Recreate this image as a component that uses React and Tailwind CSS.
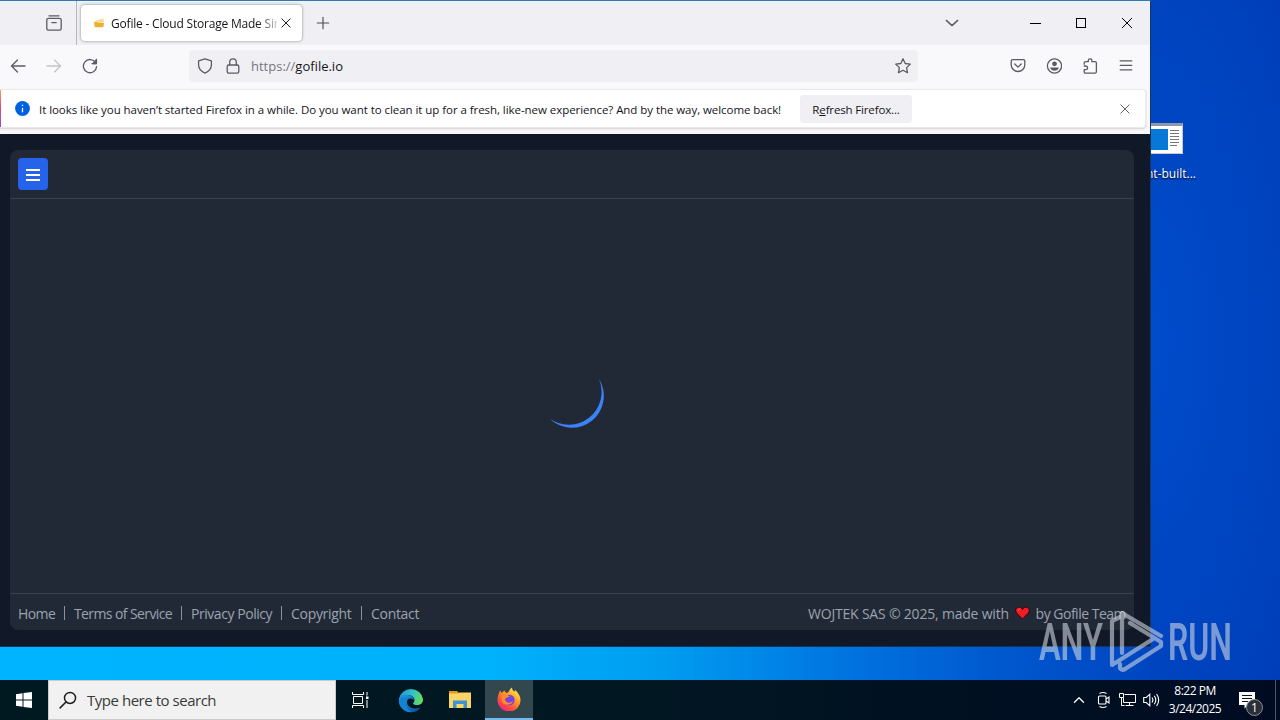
import React from "react";
import { ChevronUp } from "lucide-react";

const footerLinks = [
  { label: "Home", className: "w-[37px] tracking-[-0.6px]" },
  { label: "Terms of Service", className: "w-[98px] tracking-[-0.6px]" },
  { label: "Privacy Policy", className: "w-[81px] tracking-[-0.45px]" },
  { label: "Copyright", className: "w-[61px] tracking-[-0.3px]" },
  { label: "Contact", className: "w-[50px] tracking-[-0.3px]" },
];

const Icon = ({ size = 16, className = "", children }) => (
  <svg
    width={size}
    height={size}
    viewBox="0 0 16 16"
    fill="none"
    stroke="currentColor"
    strokeWidth="1.3"
    strokeLinecap="round"
    strokeLinejoin="round"
    className={`shrink-0 ${className}`}
  >
    {children}
  </svg>
);

const TabStrip = () => (
  <div className="flex h-[44px] items-center bg-[#efeff4]">
    <div className="flex h-full w-[77px] items-center justify-end border-r border-[#b5b5bd] pr-[14px] text-[#5b5b66]">
      <Icon>
        <path d="M3 .8h10" />
        <rect x="0.8" y="3.3" width="14.4" height="11.9" rx="1.8" />
        <path d="M5.8 7.6h4.4" />
      </Icon>
    </div>
    <div className="ml-[4px] flex h-[36px] w-[221px] items-center rounded-[4px] bg-white pl-[12px] shadow-[0_0_3px_rgba(0,0,0,0.45)]">
      <svg width="12" height="12" viewBox="0 0 12 12" className="shrink-0">
        <path d="M2 4.5 L4.5 3 L10.5 1.5 L11 5 L2 7z" fill="#f7dc93" />
        <path d="M1 5h3l1 1h6l-.5 3.5q-.2.8-1 .8H2.6q-.8 0-1-.8z" fill="#eeb02e" />
      </svg>
      <div className="ml-[6px] mt-px w-[166px] overflow-hidden whitespace-nowrap text-[12px] tracking-[-0.2px] text-[#15141a] [mask-image:linear-gradient(to_right,#000_146px,transparent_172px)]">
        Gofile - Cloud Storage Made Simple
      </div>
      <Icon size={12} className="ml-[3px] text-[#15141a]">
        <path d="M2.5 2.5l11 11M13.5 2.5l-11 11" />
      </Icon>
    </div>
    <Icon size={14} className="ml-[14px] text-[#4a4a55]">
      <path d="M8 1.5v13M1.5 8h13" />
    </Icon>
    <div className="ml-auto flex items-center">
      <Icon size={14} className="mr-[71px] text-[#5b5b66]">
        <path d="M1.5 5l6.5 6 6.5-6" strokeWidth="1.6" />
      </Icon>
      <div className="mr-[35px] h-px w-[11px] bg-black" />
      <div className="mr-[35px] h-[10px] w-[10px] border border-black" />
      <svg width="12" height="12" viewBox="0 0 12 12" className="mr-[17px]" stroke="#000" strokeWidth="1">
        <path d="M1 1l10 10M11 1L1 11" />
      </svg>
    </div>
  </div>
);

const NavBar = () => (
  <div className="flex h-[44px] items-center bg-[#f9f9fb] pb-[3px] text-[#5b5b66]">
    <Icon className="ml-[10px]">
      <path d="M15 8H1.5M7.5 2L1.5 8l6 6" />
    </Icon>
    <Icon className="ml-[20px] text-[#c3c3ca]">
      <path d="M1 8h13.5M8.5 2l6 6-6 6" />
    </Icon>
    <Icon className="ml-[20px]">
      <path d="M13.6 4.6A6.6 6.6 0 1 0 14.6 8.6M14.4 1.4v4.2h-4.4" />
      <path d="M14.4 2v3.6h-3.6z" fill="currentColor" />
    </Icon>
    <div className="ml-[91px] flex h-[32px] w-[729px] items-center rounded-[4px] bg-[#f0f0f4] pl-[8px]">
      <Icon>
        <path d="M8 .9l6.4 2v4.2c0 3.8-2.8 6.4-6.4 8-3.6-1.6-6.4-4.2-6.4-8V2.9z" />
      </Icon>
      <Icon className="ml-[12px]">
        <rect x="2.2" y="7" width="11.6" height="8.2" rx="1.6" />
        <path d="M4.7 7V4.2a3.3 3.3 0 0 1 6.6 0V7" />
      </Icon>
      <div className="ml-[10px] mt-[3px] text-[13px] text-[#777780]">
        https://<span className="text-[#15141a]">gofile.io</span>
      </div>
      <Icon className="ml-auto mr-[7px]">
        <path d="M8 .8l2.2 4.7 5.1.6-3.7 3.5.9 5.1L8 12.2l-4.5 2.5.9-5.1L.7 6.1l5.1-.6z" />
      </Icon>
    </div>
    <Icon className="ml-[92px]">
      <path d="M2.6 1.7h10.8q1.4 0 1.4 1.4v3.6a6.8 6.8 0 0 1-13.6 0V3.1q0-1.4 1.4-1.4zM4.8 6L8 9.1l3.2-3.1" />
    </Icon>
    <Icon className="ml-[20px]">
      <circle cx="8.5" cy="8" r="7.1" />
      <circle cx="8.5" cy="5.8" r="2.4" fill="currentColor" stroke="none" />
      <path d="M4.2 9.6h8.6c0 1.9-2 3.1-4.3 3.1S4.2 11.5 4.2 9.6z" fill="currentColor" stroke="none" />
    </Icon>
    <Icon className="ml-[20px]">
      <path d="M2.2 6.2V4.9q0-1.2 1.3-1.2h2.8V2.6a1.8 1.8 0 0 1 3.6 0v1.1h3.2q1.3 0 1.3 1.2v8.9q0 1.3-1.3 1.3H3.5q-1.3 0-1.3-1.3V11.7h1.5a1.8 1.8 0 0 0 0-3.7H2.2" />
    </Icon>
    <Icon className="ml-[20px]">
      <path d="M2.2 2.8h11.6M2.2 7.3h11.6M2.2 11.8h11.6" />
    </Icon>
  </div>
);

const Notification = () => (
  <div className="h-[45px] bg-[#f8f8fa] pr-[4px]">
    <div className="flex h-[39px] items-center rounded-r-[4px] border border-l-0 border-[#e9e9ed] bg-white shadow-[0_1px_2px_rgba(58,57,68,0.2)]">
      <div className="h-full w-px shrink-0 bg-gradient-to-b from-[#ff9a50] via-[#e0457b] to-[#8a45d8]" />
      <svg width="15" height="15" viewBox="0 0 15 15" className="ml-[14px] shrink-0">
        <circle cx="7.5" cy="7.5" r="7.4" fill="#0060df" />
        <path d="M7.5 6.8v4.4M7.5 3.8v1.2" stroke="#fff" strokeWidth="1.3" />
      </svg>
      <div className="ml-[9px] mt-[2px] w-[761px] whitespace-nowrap text-[11.5px] tracking-[-0.055px] text-[#15141a]">
        It looks like you haven’t started Firefox in a while. Do you want to clean it up for a fresh, like-new
        experience? And by the way, welcome back!
      </div>
      <button className="h-[28px] w-[112px] whitespace-nowrap rounded-[4px] bg-[#f0f0f4] pt-[2px] text-[11.5px] tracking-[-0.15px] text-[#15141a]">
        R<span className="underline">e</span>fresh Firefox...
      </button>
      <Icon size={12} className="ml-auto mr-[14px] text-[#5b5b66]">
        <path d="M2.5 2.5l11 11M13.5 2.5l-11 11" />
      </Icon>
    </div>
  </div>
);

const Page = () => (
  <div className="flex flex-1 flex-col bg-[#111827] pb-[16px] pl-[10px] pr-[16px] pt-[16px]">
    <div className="flex flex-1 flex-col rounded-[8px] bg-[#212936] text-[#9ca3af]">
      <div className="flex h-[49px] items-center border-b border-[#374151] px-[8px]">
        <button className="flex h-[32px] w-[30px] items-center justify-center rounded-[4px] bg-[#2563eb] pt-px">
          <span className="flex w-[14px] flex-col gap-[3px]">
            <span className="h-[2px] bg-white" />
            <span className="h-[2px] bg-white" />
            <span className="h-[2px] bg-white" />
          </span>
        </button>
      </div>
      <div className="flex flex-1 items-center justify-center">
        <svg width="66" height="66" viewBox="0 0 66 66">
          <path d="M59.9 15.7A32 32 0 0 1 10.4 55.6A33 33 0 0 0 59.9 15.7z" fill="#3b82f6" />
        </svg>
      </div>
      <div className="flex h-[37px] items-center justify-between border-t border-[#374151] px-[8px] pt-[2px] text-[14px]">
        <div className="flex items-center whitespace-nowrap">
          {footerLinks.map((link, i) => (
            <React.Fragment key={link.label}>
              {i > 0 && <span className="mx-[9px] h-[14px] w-px bg-[#8b929e]" />}
              <span className={link.className}>{link.label}</span>
            </React.Fragment>
          ))}
        </div>
        <div className="flex w-[318px] items-center whitespace-nowrap">
          <span className="w-[207px] tracking-[-0.2px]">WOJTEK SAS © 2025, made with</span>
          <svg width="15" height="14" viewBox="0 0 15 14">
            <path
              d="M7.5 13L1.5 7C-.8 3.5 2 .8 4.5 1.2 6 1.4 7 2.4 7.5 3.4 8 2.4 9 1.4 10.5 1.2 13 .8 15.8 3.5 13.5 7z"
              fill="#f21c26"
              stroke="#260509"
            />
            <path d="M3.5 4l1.2-.8" stroke="#ff8f8f" />
          </svg>
          <span className="ml-[6px] tracking-[-0.5px]">by Gofile Team</span>
        </div>
      </div>
    </div>
  </div>
);

const DesktopShortcut = () => (
  <div className="absolute left-[1128px] top-[123px] w-[80px]">
    <div className="ml-[7px] h-[31px] w-[48px] border border-[#c9c9c9] border-t-[3px] border-t-[#8f98aa] bg-white p-[3px]">
      <div className="flex h-full gap-[2px]">
        <div className="h-[21px] w-[29px] bg-[#0878d8]" />
        <div className="flex flex-1 flex-col gap-[2px] pt-px">
          <span className="h-px bg-[#777]" />
          <span className="h-px bg-[#777]" />
          <span className="h-px bg-[#777]" />
          <span className="h-px bg-[#777]" />
          <span className="h-px bg-[#777]" />
          <span className="h-px w-[7px] bg-[#777]" />
        </div>
      </div>
    </div>
    <div className="mt-[11px] whitespace-nowrap pl-[18px] text-[12px] text-white [text-shadow:0_1px_2px_#000]">nt-built...</div>
  </div>
);

const Watermark = () => (
  <svg width="200" height="64" viewBox="0 0 200 64" className="absolute left-[1038px] top-[609px]" opacity="0.58">
    <g fill="#d5dbe5" fontFamily="Roboto" fontSize="52" fontWeight="600">
      <text x="1" y="51" textLength="64" lengthAdjust="spacingAndGlyphs">ANY</text>
      <text x="130" y="51" textLength="64" lengthAdjust="spacingAndGlyphs">RUN</text>
    </g>
    <path
      d="M82 8L74 12V56L115 30M123 27L84 4V44M82 55V59Q84 62 87 60L123 37V33L92 14"
      fill="none"
      stroke="#d5dbe5"
      strokeWidth="4.2"
      strokeLinejoin="round"
      strokeLinecap="round"
    />
  </svg>
);

const EdgeIcon = () => (
  <svg width="26" height="26" viewBox="0 0 26 26">
    <defs>
      <linearGradient id="edgeTop" x1="0" y1="0.3" x2="1" y2="0.5">
        <stop offset="0" stopColor="#2196d8" />
        <stop offset="0.55" stopColor="#35c1c5" />
        <stop offset="1" stopColor="#68dd55" />
      </linearGradient>
      <linearGradient id="edgeBottom" x1="0" y1="0" x2="1" y2="1">
        <stop offset="0" stopColor="#1f9ee4" />
        <stop offset="1" stopColor="#0b4aa0" />
      </linearGradient>
    </defs>
    <path d="M1 12A12.2 12.2 0 0 1 25 12c.5 5-4 6.5-7.5 6-2.5-.4-2.8-1.2-1.8-2.4C18 12 15 8 10 8 5.5 8 2 9.5 1 12z" fill="url(#edgeTop)" />
    <path d="M.8 13C1 8 6 7.5 10 8c4 .5 6 3 6 5-4-3-7-1-7 2 0 5 6 8 13.5 5.5C20 24 17 25.2 13 25.2 5.5 25.2.8 19 .8 13z" fill="url(#edgeBottom)" />
    <path d="M9.2 10.5C6 14 7 22 14 25c-6 1-13-4-13.2-11 1-3 4-4.5 8.4-3.5z" fill="#1583d5" />
  </svg>
);

const FirefoxIcon = () => (
  <svg width="24" height="24" viewBox="0 0 24 24">
    <defs>
      <linearGradient id="foxFlame" x1="0.85" y1="0.05" x2="0.2" y2="0.95">
        <stop offset="0" stopColor="#fff14f" />
        <stop offset="0.4" stopColor="#ff9a26" />
        <stop offset="0.75" stopColor="#ff4a42" />
        <stop offset="1" stopColor="#e5277c" />
      </linearGradient>
    </defs>
    <path d="M15 .5c0 2 1 3 2 4 1-.2 1-1 1-1.5 3 2.5 5.5 6 5.5 10A11.5 11.5 0 0 1 .5 13C.5 9.5 1.5 6 3.5 3.5L4.5 6 7.5 3.5C8 5 8.5 5.5 10 6c2-.5 2.5-4 5-5.5z" fill="url(#foxFlame)" />
    <circle cx="12.5" cy="13" r="5.2" fill="#7542e5" />
    <path d="M4 9c3-2 7-1.5 9 .8-2.5 0-3.5 1-5 2.2 0 4 6 5 8 1.5-.2 5-9 6-11 1z" fill="#ff8a2a" />
  </svg>
);

const Taskbar = () => (
  <div className="relative flex h-[40px] w-full items-center bg-[linear-gradient(to_right,#001820,#011722_50%,#000b22)] text-white">
    <div className="flex h-full w-[48px] items-center justify-center">
      <svg width="16" height="16" viewBox="0 0 16 16" fill="#fff">
        <path d="M0 2.2L6.5 1.3V7.5H0zM7.5 1.1L16 0v7.5H7.5zM0 8.5h6.5v6.2L0 13.8zM7.5 8.5H16V16l-8.5-1.1z" />
      </svg>
    </div>
    <div className="flex h-full w-[288px] items-center border border-[#c9cccd] bg-[#f1f1f1] pl-[10px] text-[#1c1c1c]">
      <Icon size={18}>
        <circle cx="9.8" cy="6.2" r="4.9" />
        <path d="M6.2 9.7L1 15" />
      </Icon>
      <span className="ml-[10px] whitespace-nowrap text-[15px] tracking-[-0.47px] text-[#3a3a3a]">Type here to search</span>
    </div>
    <div className="flex h-full w-[48px] items-center justify-center">
      <svg width="17" height="16" viewBox="0 0 17 16" fill="none" stroke="#fff">
        <path d="M.5 0v2.5h11V0M.5 16v-2.5h11V16M1.5 4.5h9v7h-9zM15 0v3.5M15 8v8" />
        <rect x="14" y="4.5" width="2.5" height="2.5" fill="#fff" stroke="none" />
      </svg>
    </div>
    <div className="flex h-full w-[53px] items-center justify-center">
      <EdgeIcon />
    </div>
    <div className="flex h-full w-[48px] items-center justify-center pb-px pr-[2px]">
      <svg width="22" height="19" viewBox="0 0 22 19">
        <path d="M0 1h8l2 2h11v3H0z" fill="#e69c12" />
        <path d="M0 3.5h9l1.5-1H22V18H0z" fill="#fbd667" />
        <path d="M4 18v-7.5h14V18h-3.5v-4h-7v4z" fill="#3a94d5" />
      </svg>
    </div>
    <div className="flex h-full w-[48px] items-center justify-center border-b-2 border-[#76b9ed] bg-[#33474f]">
      <FirefoxIcon />
    </div>
    <div className="ml-auto flex h-full items-center">
      <ChevronUp size={18} strokeWidth={1.7} />
      <svg width="14" height="18" viewBox="0 0 14 18" className="ml-[9px]" fill="none" stroke="#fff" strokeWidth="1.1">
        <rect x="1.5" y="5" width="7.5" height="8" rx="1" />
        <path d="M9 8l3-2v6l-3-2M2.5 2.5Q6 .5 9.5 2.5M2.5 15.5Q6 17.5 9.5 15.5" />
      </svg>
      <svg width="17" height="16" viewBox="0 0 17 16" className="ml-[8px]" fill="none" stroke="#fff">
        <path d="M5.5 2.5h11v8h-12V6M10.5 10.5v3M6.5 13.5h8M.5 1.5h4v4h-4zM2.5 5.5v8h3" />
      </svg>
      <svg width="17" height="16" viewBox="0 0 17 16" className="ml-[7px]" fill="none" stroke="#fff" strokeWidth="1.1">
        <path d="M.7 5.5h2.6l3.5-3.3v11.6L3.3 10.5H.7zM9 5.5q1.8 2.5 0 5M11.3 3.7q3 4.3 0 8.6M13.6 2q4.2 6 0 12" />
      </svg>
      <div className="ml-[7px] w-[56px] whitespace-nowrap text-center text-[12px] leading-[18px] tracking-[-0.5px]">
        <div>8:22 PM</div>
        <div>3/24/2025</div>
      </div>
      <div className="relative ml-[16px] mr-[18px] h-[24px] w-[18px]">
        <svg width="17" height="18" viewBox="0 0 17 18" className="mt-[4px]">
          <path d="M0 0h16v13h-7l-3.5 3.5V13H0z" fill="#fff" />
          <path d="M3 3.5h10M3 6.5h10M3 9.5h6" stroke="#071323" />
        </svg>
        <span className="absolute left-[7px] top-[11px] flex h-[17px] w-[17px] items-center justify-center rounded-full border border-[#8b9097] bg-[#2b3038] text-[12px]">
          1
        </span>
      </div>
      <div className="h-full w-[5px] border-l border-[#4b5563]" />
    </div>
  </div>
);

export default function App() {
  return (
    <div className="relative flex h-[720px] w-[1280px] flex-col justify-end overflow-hidden bg-[linear-gradient(to_right,#00b4ff_0%,#00b2fc_38%,#009cf0_52%,#0074e0_66%,#0058cf_78%,#0045c0_90%,#003ab4_100%)] font-['Open_Sans','Noto_Sans',sans-serif]">
      <div className="absolute right-0 top-0 h-[680px] w-[130px] bg-[radial-gradient(ellipse_220px_620px_at_0px_340px,#004ccb_0%,#0043bf_55%,#003ab4_100%)]" />
      <DesktopShortcut />
      <div className="absolute left-0 top-0 flex h-[647px] w-[1151px] flex-col border-b border-r border-t border-b-[#12355e] border-r-[#163568] border-t-[#2a7eb0] bg-[#111827]">
        <TabStrip />
        <NavBar />
        <Notification />
        <Page />
      </div>
      <Taskbar />
      <Watermark />
    </div>
  );
}
